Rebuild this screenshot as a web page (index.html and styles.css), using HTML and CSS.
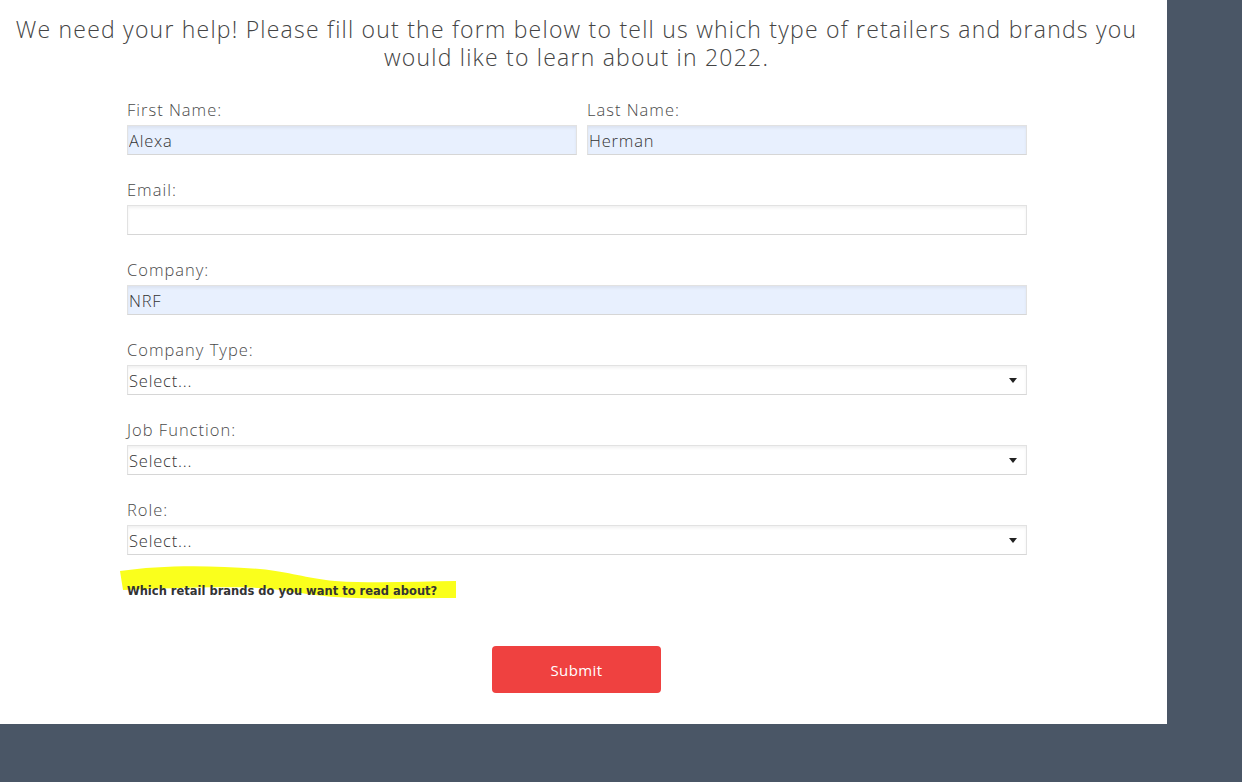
FILE: index.html
```html
<!DOCTYPE html>
<html lang="en">
<head>
    <meta charset="UTF-8">
    <title>Retail Brands Survey</title>
    <link rel="stylesheet" href="styles.css">
</head>
<body>
    <div class="panel">
        <p class="intro">We need your help! Please fill out the form below to tell us which type of retailers and brands you would like to learn about in 2022.</p>

        <form class="survey">
            <div class="row">
                <div class="field first">
                    <label>First Name:</label>
                    <input type="text" class="filled" value="Alexa">
                </div>
                <div class="field last">
                    <label>Last Name:</label>
                    <input type="text" class="filled" value="Herman">
                </div>
            </div>
            <div class="field">
                <label>Email:</label>
                <input type="text" value="">
            </div>
            <div class="field">
                <label>Company:</label>
                <input type="text" class="filled" value="NRF">
            </div>
            <div class="field">
                <label>Company Type:</label>
                <div class="select">Select...<span class="arrow"></span></div>
            </div>
            <div class="field">
                <label>Job Function:</label>
                <div class="select">Select...<span class="arrow"></span></div>
            </div>
            <div class="field">
                <label>Role:</label>
                <div class="select">Select...<span class="arrow"></span></div>
            </div>

            <div class="question">
                <svg class="marker" width="340" height="38" viewBox="0 0 340 38">
                    <path d="M0 6 C40 0 90 0 140 4 C170 7 185 13 215 16 C260 19 300 16 336 16 L336 33 C300 33 260 35 215 32 C180 29 165 25 140 23 C100 21 50 23 3 25 Z" fill="#faff1c"/>
                </svg>
                <span class="question-text">Which retail brands do you want to read about?</span>
            </div>

            <div class="actions">
                <button type="button" class="submit">Submit</button>
            </div>
        </form>
    </div>
</body>
</html>
```

FILE: styles.css
```css
body {
    margin: 0;
    background-color: #4a5666;
    font-family: "Open Sans", sans-serif;
}
.panel {
    width: 1167px;
    height: 724px;
    background-color: white;
    box-sizing: border-box;
    padding-top: 15px;
}
.intro {
    margin: 0 0 29px 0;
    padding: 0 24px 0 10px;
    text-align: center;
    font-size: 23px;
    font-weight: 300;
    line-height: 28px;
    color: #444;
    letter-spacing: 1.22px;
}
.survey {
    width: 900px;
    margin-left: 127px;
}
.row {
    display: flex;
    gap: 10px;
}
.field {
    display: flex;
    flex-direction: column;
    margin-bottom: 25px;
}
.field.first {
    width: 450px;
}
.field.last {
    width: 440px;
}
.field label {
    font-size: 16.5px;
    line-height: 20px;
    height: 25px;
    color: #4a4a4a;
    font-weight: 300;
    letter-spacing: 1px;
}
.field input,
.select {
    box-sizing: border-box;
    height: 30px;
    width: 100%;
    margin: 0;
    padding: 0 0 0 1px;
    border: 1px solid #e2e2e2;
    border-bottom-color: #d6d6d6;
    box-shadow: inset 0 2px 3px rgba(0,0,0,0.06);
    font-family: "Open Sans", sans-serif;
    font-weight: 300;
    font-size: 16.5px;
    letter-spacing: 0.8px;
    color: #333;
    background-color: white;
    outline: none;
}
.field input.filled {
    background-color: #e8f0fe;
}
.select {
    position: relative;
    display: flex;
    align-items: center;
}
.arrow {
    position: absolute;
    right: 9px;
    top: 12px;
    width: 0;
    height: 0;
    border-left: 4px solid transparent;
    border-right: 4px solid transparent;
    border-top: 5px solid #222;
}
.question {
    position: relative;
    height: 66px;
}
.marker {
    position: absolute;
    left: -7px;
    top: -15px;
}
.question-text {
    position: relative;
    display: block;
    padding-top: 4px;
    font-family: "DejaVu Sans", Verdana, sans-serif;
    font-weight: bold;
    font-size: 11.5px;
    color: #333;
}
.actions {
    display: flex;
    justify-content: center;
    padding-right: 1px;
}
.submit {
    width: 169px;
    height: 47px;
    border: none;
    border-radius: 4px;
    background-color: #ef4140;
    color: white;
    font-family: "Open Sans", sans-serif;
    font-size: 15px;
    letter-spacing: 0.4px;
}
```
